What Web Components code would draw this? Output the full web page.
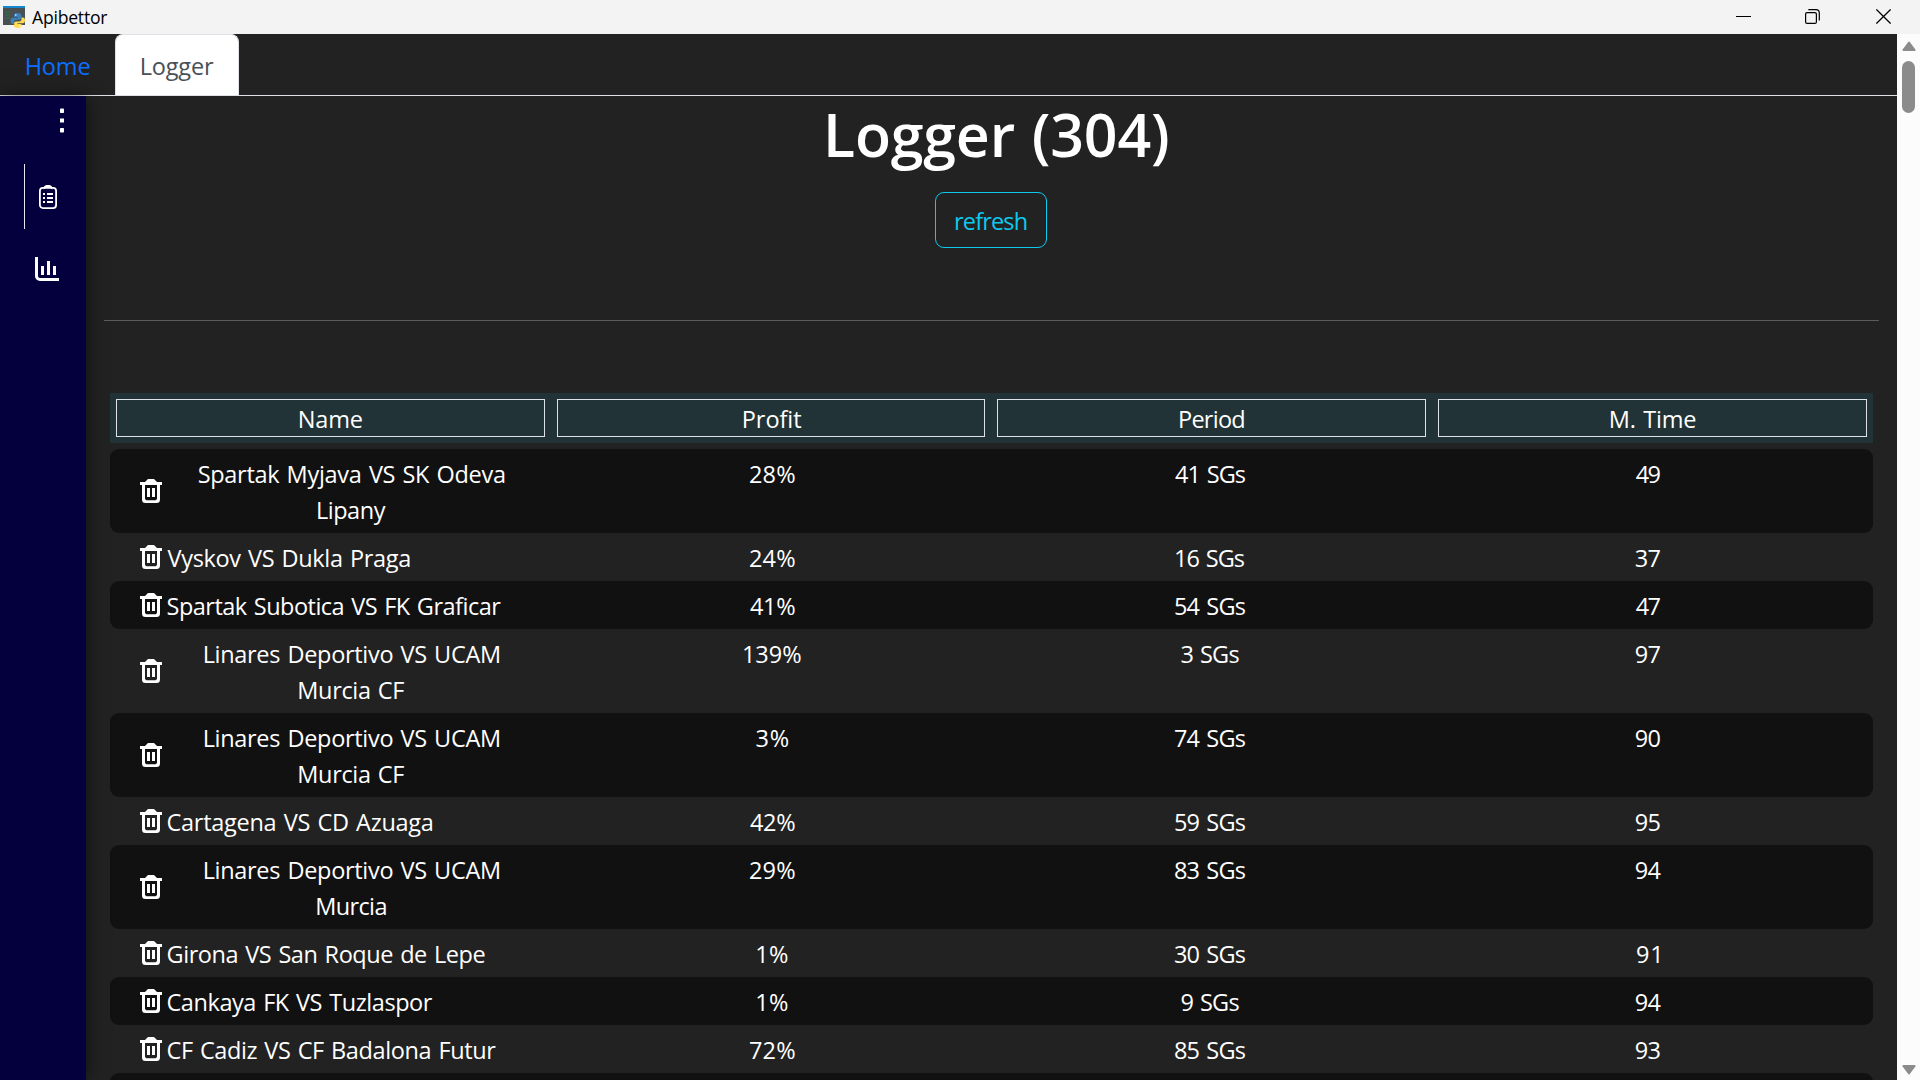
<!DOCTYPE html>
<html lang="en">
<head>
<meta charset="utf-8">
<title>Apibettor</title>
<style>
html,body{margin:0;height:100%;overflow:hidden;background:#222}
body{font-family:"Open Sans","Noto Sans",sans-serif;font-size:23.5px;color:#fff}
</style>
</head>
<body>
<app-window></app-window>
<script>
const pen = document.createElement('canvas').getContext('2d');
const define = (name, html, setup) => {
  const t = document.createElement('template');
  t.innerHTML = html;
  customElements.define(name, class extends HTMLElement {
    connectedCallback() {
      if (this.shadowRoot) return;
      this.attachShadow({mode: 'open'}).append(t.content.cloneNode(true));
      if (setup) setup.call(this, this.shadowRoot);
    }
  });
};

/* One line of text tracked so that its ink spans the width given in "w". */
define('fit-text', `<style>:host{display:inline-block;white-space:nowrap;text-align:left;word-spacing:1.500px}</style><slot></slot>`, function () {
  const cs = getComputedStyle(this), s = this.textContent, w = +this.getAttribute('w');
  pen.font = `${cs.fontWeight} ${cs.fontSize} ${cs.fontFamily}`;
  const m = pen.measureText(s);
  const ink = m.actualBoundingBoxLeft + m.actualBoundingBoxRight + 1.5 * (s.split(' ').length - 1);
  this.style.letterSpacing = ((w - ink) / Math.max(1, s.length - 1)).toFixed(3) + 'px';
  this.style.textIndent = m.actualBoundingBoxLeft.toFixed(2) + 'px';
  this.style.width = w + 'px';
});

define('title-bar', `<style>
:host{display:flex;align-items:flex-start;height:34px;background:#f3f3f3;color:#000;font-size:17.6px;line-height:34px}
.logo{margin:6px 7px 0 3px}
.t{flex:1}
.b{margin-top:9px}
.b+.b{margin-left:54px}
.b:last-child{margin:9px 29px 0 56px}
svg{display:block}
</style>
<svg class="logo" width="22" height="22" viewBox="0 0 22 22">
 <rect width="22" height="19" fill="#4a4f52"/><rect width="22" height="2" fill="#1587cf"/>
 <path d="M2.500 6h5M2.500 9h4M2.500 12h5" stroke="#2c7a3b" stroke-width="1"/>
 <path d="M14.500 7c-3 0-3.500 1-3.500 2.200v1.800h4v.8H9.800C8.300 11.800 7.500 13 7.500 15s.8 3 2.300 3H11v-2c0-1.300 1-2.300 2.300-2.300h3.200c1 0 1.900-.8 1.900-1.900V9.200C18.400 7.800 17 7 14.500 7z" fill="#3d7fb8"/>
 <path d="M15 22c3 0 3.500-1 3.500-2.200V18h-4v-.8h5.200c1.500 0 2.300-1 2.300-2.900s-.8-2.800-2.300-2.800h-1.200v1.800c0 1.300-1 2.300-2.300 2.300H13c-1 0-1.900.8-1.900 1.900v2.300c0 1.400 1.400 2.200 3.900 2.200z" fill="#ffd94f"/>
 <circle cx="12.800" cy="9" r=".8" fill="#fff"/><circle cx="16.700" cy="20" r=".8" fill="#fff"/>
</svg>
<div class="t"><fit-text w="75.300">Apibettor</fit-text></div>
<svg class="b" width="15" height="15"><path d="M0 7.500h15" stroke="#000"/></svg>
<svg class="b" width="15" height="15" fill="none" stroke="#000" stroke-width="1.200"><rect x=".6" y="3.600" width="10.800" height="10.800" rx="1.500"/><path d="M3.300 .7H11a3.300 3.300 0 0 1 3.300 3.300v7.400"/></svg>
<svg class="b" width="15" height="15"><path d="M.4 .4l14.200 14.200M14.600 .4L.4 14.600" stroke="#000" stroke-width="1.250"/></svg>`);

define('tab-bar', `<style>
:host{display:flex;height:62px;box-sizing:border-box;border-bottom:1px solid #dee2e6;line-height:64px}
.tab{height:61px;box-sizing:border-box;width:115px;padding-left:26.700px;color:#0d6efd}
.on{width:124px;padding-left:25.700px;background:#fff;color:#495057;border:1px solid #dee2e6;border-bottom:0;border-radius:8px 8px 0 0;line-height:62px}
</style>
<div class="tab"><fit-text w="62.700">Home</fit-text></div>
<div class="tab on"><fit-text w="72.300">Logger</fit-text></div>`);

define('side-bar', `<style>
:host{display:flex;flex-direction:column;width:86px;flex:none;background:#03003d;box-shadow:0 0 18px rgba(0,0,0,.55);z-index:1;position:relative}
svg{display:block}
.menu{margin:11.500px 0 0 60px}
.active{display:flex;align-items:center;margin:31.500px 0 0 24px;height:65px;border-left:1px solid #e6e6f0;padding-left:14px}
.chart{margin:28px 0 0 35px}
</style>
<svg class="menu" width="4" height="25" fill="#fff"><rect y=".5" width="4" height="4.500" rx=".8"/><rect y="10.500" width="4" height="4"/><rect y="20" width="4" height="4.500" rx=".8"/></svg>
<div class="active"><svg width="18" height="24" fill="none" stroke="#fff" stroke-width="1.800">
 <rect x=".9" y="2.900" width="16.200" height="20.200" rx="3"/><path d="M4.500 3.200C6 3.200 5.800 1 7.500 1h3c1.700 0 1.500 2.200 3 2.200" stroke-width="2"/>
 <path d="M4 9h2M4 13h2M4 17h2M8 9h6M8 13h6M8 17h6"/></svg></div>
<svg class="chart" width="24" height="24" fill="none" stroke="#fff" stroke-width="3"><path d="M1.500 0v19a3.500 3.500 0 0 0 3.500 3.500h19M7.500 9v9M13.500 4v14M19.500 9v9"/></svg>`);

define('refresh-button', `<style>
:host{display:block;margin-right:1px}
button{all:unset;box-sizing:border-box;display:block;width:112px;height:56px;border:1px solid #0dcaf0;border-radius:9px;color:#0dcaf0;line-height:57px;padding-left:20px}
</style><button><fit-text w="70.700">refresh</fit-text></button>`);

define('trash-icon', `<style>:host{display:block;width:22px;height:24px}svg{display:block}</style>
<svg width="22" height="24" fill="#fff"><path d="M0 3h5L7 1C7.500 .3 8 0 9 0h4c1 0 1.500 .3 2 1l2 2h5v3h-2v14.500a3.500 3.500 0 0 1-3.500 3.500h-11A3.500 3.500 0 0 1 2 20.500V6H0zM5 6v14l1.300 1.200h9.400L17 20V6z" fill-rule="evenodd"/><path d="M7 9h3v9H7zM12 9h3v9h-3z"/></svg>`);

define('log-header', `<style>
:host{display:grid;grid-template-columns:repeat(3,440.660px) 1fr;height:50px;background:#213336}
div{margin:6px;border:1px solid #dee2e6;text-align:center;line-height:38px;height:36px;padding-left:1px}
.profit{padding-left:3px}
</style>
<div><fit-text w="62">Name</fit-text></div><div class="profit"><fit-text w="57.500">Profit</fit-text></div>
<div><fit-text w="64.300">Period</fit-text></div><div><fit-text w="84.700">M. Time</fit-text></div>`);

define('log-row', `<style>
:host{display:grid;grid-template-columns:repeat(4,1fr);padding:7px 6px 5px;border-radius:9px;line-height:36px;text-align:center}
:host(:nth-of-type(odd)){background:#111}
.name{display:flex;align-items:center;padding-left:24px}
trash-icon{margin-top:-2px}
.lines{display:flex;flex-direction:column;margin-left:5.500px}
.two{align-items:center;width:368.600px}
</style>
<div class="name"><trash-icon></trash-icon><div class="lines"></div></div>`, function (root) {
  const {name, cells} = this.entry, lines = root.querySelector('.lines');
  const fit = ([s, w]) => {
    const f = document.createElement('fit-text');
    f.setAttribute('w', w); f.textContent = s; return f;
  };
  if (name.length > 1) lines.classList.add('two');
  name.forEach(n => lines.append(fit(n)));
  cells.forEach(c => { const d = document.createElement('div'); root.append(d); d.append(fit(c)); });
});

const LIN = ['Linares Deportivo VS UCAM', 294.3], MCF = ['Murcia CF', 105];
const ROWS = [
  [[['Spartak Myjava VS SK Odeva', 306.3], ['Lipany', 67.7]], '28%', '41 SGs', '49'],
  [[['Vyskov VS Dukla Praga', 242.7]], '24%', '16 SGs', '37'],
  [[['Spartak Subotica VS FK Graficar', 333.7]], '41%', '54 SGs', '47'],
  [[LIN, MCF], '139%', '3 SGs', '97'],
  [[LIN, MCF], '3%', '74 SGs', '90'],
  [[['Cartagena VS CD Azuaga', 265.3]], '42%', '59 SGs', '95'],
  [[LIN, ['Murcia', 69.3]], '29%', '83 SGs', '94'],
  [[['Girona VS San Roque de Lepe', 317]], '1%', '30 SGs', '91'],
  [[['Cankaya FK VS Tuzlaspor', 265.3]], '1%', '9 SGs', '94'],
  [[['CF Cadiz VS CF Badalona Futur', 328.7]], '72%', '85 SGs', '93'],
];
const profitW = s => ({2: s[0] === '1' ? 31 : 32.5, 3: 45.5, 4: 57.5})[s.length];
const periodW = s => s.length === 5 ? 58 : s[0] === '1' ? 69 : 71;

define('log-table', `<style>
:host{display:block;width:1763px}
.rows{margin-top:6px}
.next{height:48px;background:#111;border-radius:9px}
</style><log-header></log-header><div class="rows"></div>`, function (root) {
  const box = root.querySelector('.rows');
  for (const [name, p, s, t] of ROWS) {
    const r = document.createElement('log-row');
    r.entry = {name, cells: [[p, profitW(p)], [s, periodW(s)], [t, t === '91' ? 22.5 : 24.7]]};
    box.append(r);
  }
  const next = document.createElement('div');
  next.className = 'next';
  box.append(next);
});

define('logger-page', `<style>
:host{display:flex;flex-direction:column;align-items:center;flex:1;min-width:0;padding:0 18px}
h1{flex:none;margin:0;font-size:59px;font-weight:600;line-height:72px;height:73px;padding:2px 0 0 13px}
refresh-button{flex:none;margin-top:21px}
hr{flex:none;align-self:stretch;margin:72px 0;border:0;height:1px;background:#5c5c5c}
log-table{flex:none}
</style>
<h1><fit-text w="340">Logger (304)</fit-text></h1>
<refresh-button></refresh-button>
<hr>
<log-table></log-table>`);

define('scroll-bar', `<style>
:host{display:flex;flex-direction:column;align-items:center;width:23px;flex:none;background:#fcfcfc}
svg{display:block;margin-top:7px}
.thumb{width:13px;height:52px;margin-top:10px;border-radius:6.500px;background:#8b8b8b}
.down{margin:auto 0 5px}
</style>
<svg width="14" height="10"><path d="M7 1.500L12.600 9H1.400z" fill="#8b8b8b" stroke="#8b8b8b" stroke-width="2" stroke-linejoin="round"/></svg>
<div class="thumb"></div>
<svg class="down" width="14" height="10"><path d="M7 8.500L12.600 1H1.400z" fill="#8b8b8b" stroke="#8b8b8b" stroke-width="2" stroke-linejoin="round"/></svg>`);

define('app-window', `<style>
:host{display:flex;flex-direction:column;width:1920px;height:1080px;overflow:hidden;background:#222}
.view{display:flex;flex:1;min-height:0}
.page{display:flex;flex-direction:column;flex:1;min-width:0}
.body{display:flex;flex:1;min-height:0}
</style>
<title-bar></title-bar>
<div class="view"><div class="page"><tab-bar></tab-bar><div class="body"><side-bar></side-bar><logger-page></logger-page></div></div><scroll-bar></scroll-bar></div>`);
</script>
</body>
</html>
